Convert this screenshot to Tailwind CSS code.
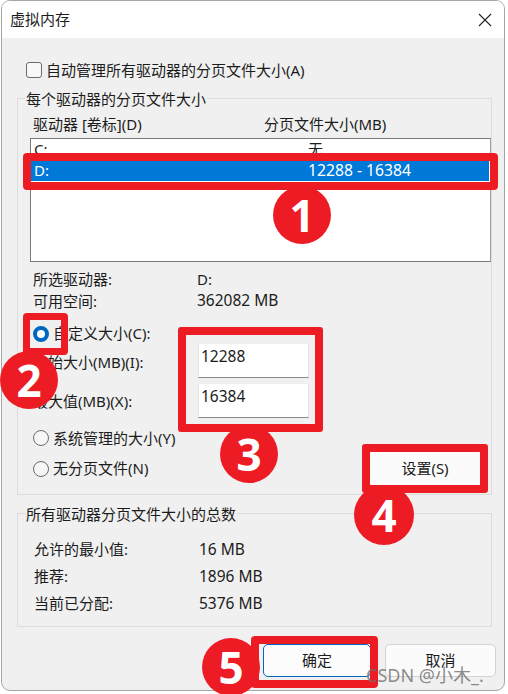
<!DOCTYPE html>
<html lang="zh">
<head>
<meta charset="utf-8">
<script src="https://cdn.jsdelivr.net/npm/@tailwindcss/browser@4"></script>
</head>
<body class="bg-white">
<div class="relative w-[508px] h-[694px] overflow-hidden bg-white text-[15px] text-[#1c1c1c] font-['Noto_Sans','Noto_Sans_CJK_SC',sans-serif] leading-none">
  <div class="ml-[1px] w-[504px] h-[691px] border border-[#a6a6a6] rounded-[9px] overflow-hidden bg-[#f0f0f0]">
    <div class="h-[37px] bg-white flex items-center justify-between pl-[8px] pr-[12px]">
      <span class="text-[15px]">虚拟内存</span>
      <svg class="w-[14px] h-[14px]" viewBox="0 0 14 14" fill="none" stroke="#222" stroke-width="1.1"><path d="M1 1L13 13M13 1L1 13"/></svg>
    </div>
    <div class="pl-[15px]">
      <div class="mt-[22px] h-[20px] flex items-center pl-[9px] gap-[4px]">
        <span class="w-[16px] h-[16px] rounded-[3px] border border-[#6b6b6b] bg-[#f8f8f8]"></span>
        <span>自动管理所有驱动器的分页文件大小(A)</span>
      </div>

      <div class="relative mt-[18px] w-[475px] h-[397px] border border-[#dcdcdc]">
        <span class="absolute left-[7px] top-[-9px] px-[1px] bg-[#f0f0f0] leading-[18px]">每个驱动器的分页文件大小</span>
        <div class="pt-[15px] h-[35px] flex items-center pl-[15px]">
          <span class="w-[231px]">驱动器 [卷标](D)</span>
          <span>分页文件大小(MB)</span>
        </div>
        <div class="ml-[12px] mt-[4px] w-[461px] h-[124px] border border-[#7a7a7a] border-r-[#a0a0a0] bg-white overflow-hidden">
          <div class="h-[21px] flex items-center pl-[3px]">
            <span class="w-[274px]">C:</span><span>无</span>
          </div>
          <div class="h-[21px] mr-[1px] flex items-center pl-[3px] bg-[#0078d7] text-white">
            <span class="w-[274px]">D:</span><span class="text-[15.7px]">12288 - 16384</span>
          </div>
        </div>

        <div class="mt-[6px] h-[22px] flex items-center pl-[15px]"><span class="w-[164px]">所选驱动器:</span><span>D:</span></div>
        <div class="h-[22px] flex items-center pl-[15px]"><span class="w-[164px]">可用空间:</span><span class="text-[15.5px]">362082 MB</span></div>

        <div class="mt-[11px] h-[21px] flex items-center pl-[15px] gap-[4px]">
          <span class="w-[16px] h-[16px] rounded-full bg-white border-[4px] border-[#0067c0]"></span>
          <span>自定义大小(C):</span>
        </div>
        <div class="h-[34px] flex items-center pl-[15px]">
          <span class="w-[165px] pt-[2px]">初始大小(MB)(I):</span>
          <span class="w-[111px] h-[34px] pl-[2px] bg-white border-b border-b-[#8a8a8a] border-x border-x-[#e4e4e4] text-[15.5px] leading-[24px]">12288</span>
        </div>
        <div class="mt-[6px] h-[34px] flex items-center pl-[15px]">
          <span class="w-[165px]">最大值(MB)(X):</span>
          <span class="w-[111px] h-[34px] pl-[2px] bg-white border-b border-b-[#8a8a8a] border-x border-x-[#e4e4e4] text-[15.5px] leading-[24px]">16384</span>
        </div>
        <div class="mt-[9px] h-[22px] flex items-center pl-[15px] gap-[4px]">
          <span class="w-[16px] h-[16px] rounded-full bg-[#f6f6f6] border border-[#6b6b6b]"></span>
          <span>系统管理的大小(Y)</span>
        </div>
        <div class="mt-[3px] h-[33px] flex items-center pl-[15px]">
          <span class="w-[16px] h-[16px] rounded-full bg-[#f6f6f6] border border-[#6b6b6b]"></span>
          <span class="ml-[4px] w-[317px]">无分页文件(N)</span>
          <span class="w-[110px] h-[33px] flex items-center justify-center bg-[#fbfbfb] rounded-[3px]">设置(S)</span>
        </div>
      </div>

      <div class="relative mt-[18px] w-[475px] h-[114px] border border-[#dcdcdc] pt-[22px]">
        <span class="absolute left-[7px] top-[-9px] px-[1px] bg-[#f0f0f0] leading-[18px]">所有驱动器分页文件大小的总数</span>
        <div class="h-[27px] flex items-center pl-[16px]"><span class="w-[165px]">允许的最小值:</span><span class="text-[15.5px]">16 MB</span></div>
        <div class="h-[27px] flex items-center pl-[16px]"><span class="w-[165px]">推荐:</span><span class="text-[15.5px]">1896 MB</span></div>
        <div class="h-[27px] flex items-center pl-[16px]"><span class="w-[165px]">当前已分配:</span><span class="text-[15.5px]">5376 MB</span></div>
      </div>

      <div class="mt-[17px] ml-[246px] flex gap-[14px]">
        <span class="w-[108px] h-[33px] flex items-center justify-center bg-[#fcfcfc] border border-[#0067c0] rounded-[5px]">确定</span>
        <span class="w-[111px] h-[33px] flex items-center justify-center bg-[#fbfbfb] border border-[#d2d2d2] rounded-[5px]">取消</span>
      </div>
    </div>
  </div>

  <!-- red annotation frames -->
  <div class="absolute left-[23px] top-[153px] w-[475px] h-[37px] border-[8px] border-[#ed1c24] rounded-[4px]"></div>
  <div class="absolute left-[23px] top-[313px] w-[45px] h-[42px] border-[7px] border-[#ed1c24] rounded-[4px]"></div>
  <div class="absolute left-[178px] top-[327px] w-[145px] h-[105px] border-[8px] border-[#ed1c24] rounded-[3px]"></div>
  <div class="absolute left-[362px] top-[444px] w-[126px] h-[49px] border-[8px] border-[#ed1c24] rounded-[3px]"></div>
  <div class="absolute left-[251px] top-[636px] w-[127px] h-[52px] border-[8px] border-[#ed1c24] rounded-[4px]"></div>

  <!-- numbered badges -->
  <div class="absolute left-[273px] top-[186px] w-[58px] h-[58px] rounded-full bg-[#ed1c24] flex items-center justify-center text-white text-[44px] font-bold font-['Open_Sans',sans-serif]">1</div>
  <div class="absolute left-[0px] top-[351px] w-[58px] h-[58px] rounded-full bg-[#ed1c24] flex items-center justify-center text-white text-[44px] font-bold font-['Open_Sans',sans-serif]">2</div>
  <div class="absolute left-[220px] top-[425px] w-[58px] h-[58px] rounded-full bg-[#ed1c24] flex items-center justify-center text-white text-[44px] font-bold font-['Open_Sans',sans-serif]">3</div>
  <div class="absolute left-[354px] top-[485px] w-[60px] h-[60px] rounded-full bg-[#ed1c24] flex items-center justify-center text-white text-[44px] font-bold font-['Open_Sans',sans-serif]">4</div>
  <div class="absolute left-[202px] top-[638px] w-[58px] h-[58px] rounded-full bg-[#ed1c24] flex items-center justify-center text-white text-[44px] font-bold font-['Open_Sans',sans-serif]">5</div>

  <!-- watermark -->
  <div class="absolute left-[366px] top-[665px] text-[18px] leading-[20px] text-[#6e6e6e]/80 whitespace-nowrap">CSDN @小木_.</div>
</div>
</body>
</html>
